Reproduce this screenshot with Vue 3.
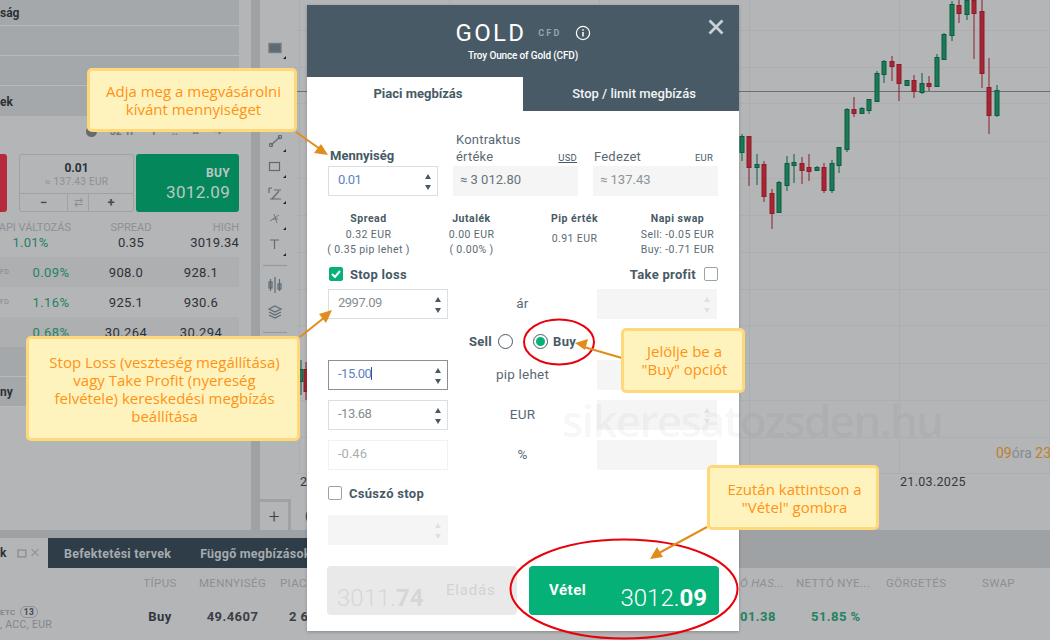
<script setup>
const gridY = [30, 67, 103, 141, 178, 215, 252, 289, 325, 363, 400, 437, 473]
const gridX = [299, 449, 599, 749, 899, 1049]

// cx, wick top, wick bottom, body top, body bottom, up?
const candles = [
  [301, 360, 395, 369, 381, 1], [306, 362, 400, 369, 391, 0],
  [742, 134, 161, 136, 152, 1], [749, 136, 186, 136, 167, 0], [757, 154, 185, 164, 167, 1],
  [764, 161, 202, 164, 196, 0], [772, 189, 229, 193, 213, 0], [779, 181, 212, 182, 212, 1],
  [787, 156, 191, 163, 185, 1], [794, 154, 183, 162, 165, 1], [802, 157, 184, 163, 170, 0],
  [809, 154, 181, 167, 171, 0], [817, 166, 170, 167, 170, 1], [824, 163, 193, 167, 190, 0],
  [832, 160, 193, 163, 190, 1], [839, 147, 173, 147, 165, 1], [847, 108, 152, 109, 149, 1],
  [854, 97, 117, 109, 113, 0], [862, 107, 113, 108, 113, 1], [869, 99, 114, 99, 110, 1],
  [877, 71, 101, 73, 101, 1], [884, 60, 83, 61, 74, 1], [892, 56, 81, 61, 66, 0],
  [899, 64, 101, 64, 83, 0], [907, 80, 85, 80, 85, 1], [914, 75, 98, 80, 91, 0],
  [922, 73, 94, 83, 92, 1], [929, 76, 91, 83, 86, 0], [937, 54, 87, 57, 86, 1],
  [944, 33, 59, 34, 59, 1], [952, 1, 41, 4, 35, 1], [959, 0, 23, 5, 13, 0],
  [967, 0, 20, 0, 14, 1], [974, 0, 59, 0, 13, 0], [982, 0, 88, 11, 73, 0],
  [989, 58, 134, 87, 115, 0], [997, 85, 117, 90, 115, 1]
]

const miniRows = [
  { tag: 'FD', pct: '0.09%', bid: '908.0', ask: '928.1', odd: true },
  { tag: 'FD', pct: '1.16%', bid: '925.1', ask: '930.6', odd: false },
  { tag: '', pct: '0.68%', bid: '30.264', ask: '30.294', odd: true }
]

const fees = [
  { title: 'Spread', lines: ['0.32 EUR', '( 0.35 pip lehet )'] },
  { title: 'Jutalék', lines: ['0.00 EUR', '( 0.00% )'] },
  { title: 'Pip érték', lines: ['0.91 EUR'], single: true },
  { title: 'Napi swap', lines: ['Sell: -0.05 EUR', 'Buy: -0.71 EUR'] }
]
</script>

<template>
  <div class="page">
    <div class="top">
      <aside class="side">
        <div class="side-row">ság</div>
        <div class="side-row"></div>
        <div class="side-row"></div>
        <div class="side-row last">ek</div>

        <div class="tools-mini">
          <span class="dot"></span><span>32·1F</span><span>T</span><span>⫶⫶</span><span>⌑</span><span>-+</span>
        </div>

        <div class="quote">
          <div class="sell-card"></div>
          <div class="qty-card">
            <div class="qty-main">
              <b>0.01</b>
              <span>≈ 137.43 EUR</span>
            </div>
            <div class="qty-ctrl">
              <span class="minus">−</span>
              <span class="swap">⇄</span>
              <span class="plus">+</span>
            </div>
          </div>
          <div class="buy-card">
            <b>BUY</b>
            <span>3012.09</span>
          </div>
        </div>

        <div class="stat-grid heads">
          <span>API VÁLTOZÁS</span><span>SPREAD</span><span>HIGH</span>
        </div>
        <div class="stat-grid vals">
          <span class="green center">1.01%</span><span>0.35</span><span>3019.34</span>
        </div>

        <div v-for="r in miniRows" :key="r.bid" class="mini-row" :class="{ odd: r.odd }">
          <span class="tag">{{ r.tag }}</span>
          <span class="green">{{ r.pct }}</span>
          <span>{{ r.bid }}</span>
          <span>{{ r.ask }}</span>
        </div>
        <div class="side-row section"></div>
        <div class="side-row section">ny</div>
      </aside>

      <div class="gutter"></div>

      <div class="toolbar">
        <svg width="35" height="530" viewBox="260 0 35 530" fill="none" stroke="#5f6b73" stroke-width="1.2">
          <rect x="269" y="43.500" width="12" height="9" fill="#5f6b73" stroke="#767c80" stroke-width="1.400" />
          <path d="M286 59v-3l-3 3z" fill="#222" stroke="none" />
          <path d="M271 145l9-8" />
          <circle cx="271" cy="145" r="1.6" />
          <circle cx="280" cy="137" r="1.6" />
          <path d="M286 152v-3l-3 3z" fill="#222" stroke="none" />
          <rect x="269.500" y="162.500" width="10" height="8" />
          <path d="M286 178v-3l-3 3z" fill="#222" stroke="none" />
          <path d="M274 190h7M270 199h11M279 191l-7 8M269 188h3M269 188v5" />
          <path d="M286 204v-3l-3 3z" fill="#222" stroke="none" />
          <path d="M270 221l9-6M274 214l3 9M278 219h-5" stroke-width="0.8" />
          <path d="M286 230v-3l-3 3z" fill="#222" stroke="none" />
          <path d="M270 240h9M274.500 240v9" />
          <path d="M286 256v-3l-3 3z" fill="#222" stroke="none" />
          <path d="M263 265.500h24" stroke="#949a9e" />
          <path d="M270.500 279v12M279.500 279v12M275 277v16" />
          <rect x="269" y="282" width="3" height="6" />
          <rect x="278" y="284" width="3" height="5" />
          <path d="M275 306l6 3-6 3-6-3zM269 312l6 3 6-3M269 315l6 3 6-3" />
          <path d="M263 332.500h24" stroke="#949a9e" />
        </svg>
        <div class="zoom-btn">+</div>
      </div>

      <div class="chart">
        <svg width="755" height="530" viewBox="295 0 755 530">
          <line v-for="y in gridY" :key="'h' + y" x1="295" x2="1050" :y1="y + 0.5" :y2="y + 0.5" stroke="#acaeb1" />
          <line v-for="x in gridX" :key="'v' + x" :x1="x + 0.5" :x2="x + 0.5" y1="0" y2="473" stroke="#acaeb1" />
          <line x1="295" x2="1050" y1="91.5" y2="91.5" stroke="#697173" />
          <g v-for="c in candles" :key="c[0]">
            <line :x1="c[0]" :x2="c[0]" :y1="c[1]" :y2="c[2]" :stroke="c[5] ? '#0b5d41' : '#8c1c2b'" />
            <rect :x="c[0] - 2" :y="c[3] + 0.5" width="4" :height="c[4] - c[3]"
              :fill="c[5] ? '#1c7a56' : '#a82533'" :stroke="c[5] ? '#0b5d41' : '#8c1c2b'" />
          </g>
          <text x="300" y="486" class="axis">2</text>
          <text x="900" y="486" class="axis">21.03.2025</text>
          <text x="996" y="458" class="timer"><tspan fill="#bf7f2c">09</tspan>óra <tspan fill="#bf7f2c">23</tspan></text>
          <text x="305" y="520" class="axis">(</text>
        </svg>
      </div>
    </div>

    <div class="band"></div>

    <div class="tabs-strip">
      <div class="tab-first">
        <span class="tab-k">k</span>
        <svg width="32" height="12" viewBox="0 0 32 12" fill="none" stroke="#8f9498" stroke-width="1.2">
          <rect x="1" y="3" width="8" height="7" stroke-width="1.6" />
          <path d="M15 2l7 7M22 2l-7 7" />
        </svg>
      </div>
      <div class="tab-dark">
        <span>Befektetési tervek</span>
        <span>Függő megbízások</span>
      </div>
    </div>

    <div class="pos-grid pos-head">
      <span></span><span class="center">TÍPUS</span><span class="center">MENNYISÉG</span><span class="piac">PIAC</span>
      <span class="it">Ó HAS...</span><span>NETTÓ NYE...</span><span>GÖRGETÉS</span><span>SWAP</span>
    </div>
    <div class="pos-grid pos-row">
      <span class="pos-name">
        <small>ETC <i>13</i></small>
        <small>, ACC, EUR</small>
      </span>
      <span class="center buy-txt">Buy</span>
      <span class="center">49.4607</span>
      <span class="piac2">2 6</span>
      <span class="green it-val">01.38</span>
      <span class="green pct-val">51.85 %</span>
      <span></span><span></span>
    </div>

    <!-- order dialog -->
    <section class="modal">
      <header class="m-head">
        <div class="m-title">
          <span class="gold">GOLD</span>
          <span class="cfd">CFD</span>
          <svg width="16" height="16" viewBox="0 0 16 16" fill="none" stroke="#fff" stroke-width="1.2">
            <circle cx="8" cy="8" r="6.600" />
            <path d="M8 7v4.500M8 4.300v1.400" stroke-width="1.500" />
          </svg>
        </div>
        <div class="m-sub">Troy Ounce of Gold (CFD)</div>
        <svg class="m-close" width="16" height="16" viewBox="0 0 16 16" stroke="#c9d1d6" stroke-width="2.800">
          <path d="M1.500 1.500l13 13M14.500 1.500l-13 13" />
        </svg>
      </header>

      <nav class="m-tabs">
        <div class="m-tab active">Piaci megbízás</div>
        <div class="m-tab">Stop / limit megbízás</div>
      </nav>

      <div class="m-body">
        <div class="trio">
          <div class="col-qty">
            <label class="strong pl2">Mennyiség</label>
            <div class="field qty"><span class="blue">0.01</span><i class="spin"></i></div>
          </div>
          <div class="col-info">
            <label class="lbl"><span>Kontraktus<br>értéke</span><u>USD</u></label>
            <div class="field ro dark-txt"><span>≈ 3 012.80</span></div>
          </div>
          <div class="col-info">
            <label class="lbl fed"><span>Fedezet</span><em>EUR</em></label>
            <div class="field ro"><span>≈ 137.43</span></div>
          </div>
        </div>

        <div class="fees">
          <div v-for="f in fees" :key="f.title" class="fee">
            <b>{{ f.title }}</b>
            <span v-for="l in f.lines" :key="l" :class="{ single: f.single }">{{ l }}</span>
          </div>
        </div>

        <div class="checks">
          <span class="chk on">
            <svg width="10" height="8" viewBox="0 0 10 8" fill="none" stroke="#fff" stroke-width="2"><path d="M1 4l3 3 5-6" /></svg>
          </span>
          <span class="strong">Stop loss</span>
          <span class="strong push">Take profit</span>
          <span class="chk"></span>
        </div>

        <div class="sl-row">
          <div class="field w120 gray-txt"><span>2997.09</span><i class="spin"></i></div>
          <span class="mid">ár</span>
          <div class="field w120 off"><i class="spin faint"></i></div>
        </div>

        <div class="radios">
          <span class="strong">Sell</span>
          <span class="radio"></span>
          <span class="radio on"></span>
          <span class="strong">Buy</span>
        </div>

        <div class="sl-row">
          <div class="field w120 focus"><span class="blue">-15.00<s class="caret"></s></span><i class="spin"></i></div>
          <span class="mid">pip lehet</span>
          <div class="field w120 off"></div>
        </div>
        <div class="sl-row">
          <div class="field w120 gray-txt"><span>-13.68</span><i class="spin"></i></div>
          <span class="mid">EUR</span>
          <div class="field w120 off"><i class="spin faint"></i></div>
        </div>
        <div class="sl-row">
          <div class="field w120 light"><span>-0.46</span></div>
          <span class="mid">%</span>
          <div class="field w120 off"></div>
        </div>

        <div class="trail">
          <span class="chk"></span>
          <span class="strong">Csúszó stop</span>
        </div>
        <div class="field w120 off"><i class="spin faint"></i></div>

        <div class="actions">
          <button class="act sell-act">
            <span class="price">3011.<b>74</b></span>
            <span class="act-name">Eladás</span>
          </button>
          <button class="act buy-act">
            <span class="act-name">Vétel</span>
            <span class="price">3012.<b>09</b></span>
          </button>
        </div>
      </div>
    </section>

    <div class="watermark">sikeresatozsden.hu</div>

    <!-- annotations -->
    <svg class="marks" width="1050" height="640" viewBox="0 0 1050 640" fill="none">
      <ellipse cx="559" cy="342" rx="35" ry="22.500" stroke="#e8000b" stroke-width="2" />
      <ellipse cx="624" cy="589" rx="113.500" ry="49.500" stroke="#e8000b" stroke-width="2" />
      <g stroke="#e08d1e" stroke-width="2">
        <path d="M296 132l24 17" />
        <path d="M300 337l25-20" />
        <path d="M622 358l-38-11" />
        <path d="M707 527l-48 26" />
      </g>
      <g fill="#e08d1e">
        <path d="M328 155l-14-2 7-9z" />
        <path d="M332 310l-6 13-7-9z" />
        <path d="M575 343l13-4-3 11z" />
        <path d="M650 559l7-12 6 10z" />
      </g>
    </svg>

    <div class="note n1">Adja meg a megvásárolni<br>kívánt mennyiséget</div>
    <div class="note n2">Stop Loss (veszteség megállítása)<br>vagy Take Profit (nyereség<br>felvétele) kereskedési megbízás<br>beállítása</div>
    <div class="note n3">Jelölje be a<br>"Buy" opciót</div>
    <div class="note n4">Ezután kattintson a<br>"Vétel" gombra</div>
  </div>
</template>

<style>
html, body { margin: 0; overflow: hidden; }
</style>

<style scoped>
.page {
  position: relative;
  width: 1050px;
  height: 640px;
  overflow: hidden;
  background: #b4b5b7;
  font-family: Roboto, sans-serif;
  color: #2b3238;
  display: flex;
  flex-direction: column;
}
.top { display: flex; height: 530px; flex: none; }

/* left panel */
.side { width: 239px; flex: none; font-size: 13px; }
.side-row {
  height: 29px;
  line-height: 26px;
  background: #a4a8ab;
  border-bottom: 1px solid #b8babc;
  font-weight: 700;
  font-size: 12px;
}
.side-row:first-child { height: 25px; }
.side-row.last { border-bottom: 0; height: 30px; line-height: 32px; }
.side-row.section { line-height: 30px; }
.tools-mini {
  height: 38px;
  box-sizing: border-box;
  padding: 10px 0 0 86px;
  display: flex;
  gap: 15px;
  font-size: 10px;
  font-weight: 700;
  color: #6e7377;
}
.dot { width: 11px; height: 11px; border-radius: 50%; background: #666a6d; margin-right: -2px; }
.quote { display: flex; height: 58px; }
.sell-card { width: 7px; background: #b52b3c; border-radius: 0 3px 3px 0; margin-right: 12px; }
.qty-card {
  width: 115px;
  box-sizing: border-box;
  border: 1px solid #9ea2a5;
  border-radius: 3px;
  margin-right: 2px;
  display: flex;
  flex-direction: column;
}
.qty-main { flex: 1; display: flex; flex-direction: column; align-items: center; padding-top: 6px; }
.qty-main b { font-size: 12px; line-height: 14px; }
.qty-main span { font-size: 10px; line-height: 14px; color: #8b9094; letter-spacing: 0.3px; }
.qty-ctrl {
  height: 17px;
  border-top: 1px solid #9ea2a5;
  display: grid;
  grid-template-columns: 47px 22px 1fr;
  text-align: center;
  font-size: 13px;
  line-height: 17px;
  font-weight: 700;
  color: #444a4f;
}
.swap { border: solid #9ea2a5; border-width: 0 1px; color: #8a8f93; font-weight: 400; font-size: 11px; }
.buy-card {
  width: 103px;
  background: #05875c;
  border-radius: 3px;
  color: #bcc7c3;
  text-align: right;
  padding: 12px 9px 0 0;
  box-sizing: border-box;
  display: flex;
  flex-direction: column;
}
.buy-card b { font-size: 12px; line-height: 14px; letter-spacing: 0.3px; }
.buy-card span { font-size: 17px; line-height: 24px; letter-spacing: 0.3px; }
.stat-grid { display: grid; grid-template-columns: 71px 120px 48px; font-size: 11px; }
.stat-grid span { white-space: nowrap; }
.stat-grid span:nth-child(1) { justify-self: end; }
.stat-grid span:nth-child(2) { justify-self: center; }
.stat-grid span:nth-child(3) { justify-self: end; }
.heads { color: #8d9195; padding-top: 9px; line-height: 14px; }
.vals { font-size: 13px; line-height: 16px; padding: 0 0 6px; letter-spacing: 0.2px; }
.vals .center { justify-self: center !important; padding-right: 10px; }
.green { color: #23825f; }
.mini-row {
  height: 30px;
  display: grid;
  grid-template-columns: 17px 68px 82px 68px 4px;
  align-items: center;
  text-align: center;
  font-size: 13px;
  letter-spacing: 0.4px;
}
.mini-row.odd { background: #adafb1; }
.tag { font-size: 7px; color: #82868a; text-align: left; }
.side-row.section { height: 29px; background: #a4a8ab; }

.gutter { width: 21px; flex: none; background: linear-gradient(to right, #b4b5b7 12px, #9ea2a5 12px); }

/* chart */
.toolbar { width: 35px; flex: none; position: relative; }
.toolbar svg { display: block; }
.zoom-btn {
  position: absolute;
  left: 0;
  bottom: 0;
  width: 28px;
  height: 28px;
  text-align: center;
  font-size: 19px;
  font-weight: 300;
  line-height: 30px;
  color: #3b4146;
  border: solid #9ea2a5;
  border-width: 3px 3px 0 0;
}
.chart { flex: 1; }
.chart svg { display: block; }
.axis { font-size: 12.500px; fill: #33393f; font-family: Roboto, sans-serif; letter-spacing: 0.3px; }
.timer { font-size: 14px; fill: #868b8f; font-family: Roboto, sans-serif; }

/* bottom */
.band { height: 8px; flex: none; background: #9ea2a5; }
.tabs-strip { height: 30px; flex: none; display: flex; background: #9ea2a5; }
.tab-first { width: 48px; background: #b4b5b7; display: flex; align-items: center; gap: 10px; font-size: 12px; font-weight: 700; }
.tab-k { width: 7px; overflow: hidden; }
.tab-dark {
  width: 452px;
  background: #2f3d48;
  color: #a5abaf;
  font-size: 12.500px;
  font-weight: 700;
  display: flex;
  align-items: center;
  gap: 29px;
  padding-left: 16px;
  box-sizing: border-box;
  letter-spacing: 0.25px;
}
.pos-grid { display: grid; grid-template-columns: 130px 60px 85px 455px 66px 90px 96px 68px; align-items: center; white-space: nowrap; }
.pos-head { height: 30px; font-size: 11.500px; color: #8c9094; letter-spacing: 0.35px; }
.pos-row { height: 42px; font-size: 13px; font-weight: 700; letter-spacing: 0.45px; color: #3a4046; padding-bottom: 6px; box-sizing: border-box; }
.center { justify-self: center; }
.piac { padding-left: 5px; }
.piac2 { padding-left: 14px; }
.it { font-style: italic; padding-left: 10px; }
.it-val { padding-left: 10px; color: #23825f; }
.pct-val { padding-left: 15px; color: #23825f; }
.buy-txt { color: #30373d; }
.pos-name { display: flex; flex-direction: column; color: #82878b; padding-top: 8px; align-self: start; }
.pos-name small { font-size: 10.500px; line-height: 12px; font-weight: 400; letter-spacing: 0.3px; }
.pos-name small:first-child { font-weight: 700; font-size: 8px; }
.pos-name i {
  font-style: normal;
  font-size: 8.500px;
  color: #43494e;
  border: 1px solid #8e9296;
  border-radius: 8px;
  padding: 0 3px;
  margin-left: 2px;
}

/* modal */
.modal {
  position: absolute;
  left: 307px;
  top: 5px;
  width: 432px;
  height: 626px;
  background: #fff;
  box-shadow: 0 1px 3px rgba(0, 0, 0, 0.25);
  color: #475a65;
  font-size: 12px;
  display: flex;
  flex-direction: column;
}
.m-head {
  position: relative;
  height: 72px;
  flex: none;
  background: #475a65;
  color: #fff;
  box-sizing: border-box;
  padding-top: 13px;
  text-align: center;
}
.m-title { display: flex; align-items: center; justify-content: center; height: 30px; }
.gold { font-size: 24px; letter-spacing: 2.300px; font-weight: 400; margin-right: 12px; }
.cfd { font-size: 9px; font-weight: 700; letter-spacing: 2.200px; color: #98a5ad; margin-right: 13px; }
.m-sub { font-size: 10px; font-weight: 500; letter-spacing: -0.15px; margin-top: 1px; line-height: 14px; }
.m-close { position: absolute; right: 15px; top: 14px; }
.m-tabs { display: flex; height: 34px; flex: none; }
.m-tab {
  flex: 1;
  text-align: center;
  line-height: 33px;
  background: #475a65;
  color: #f2f4f5;
  font-size: 13px;
  font-weight: 500;
  padding-left: 6px;
}
.m-tab.active { background: #fff; color: #475a65; font-weight: 700; }
.m-body { padding: 21px 21px 0; flex: 1; display: flex; flex-direction: column; }
.trio { display: grid; grid-template-columns: 110px 125px 125px; grid-template-rows: 64px; column-gap: 15px; height: 64px; }
.col-qty, .col-info { display: flex; flex-direction: column; justify-content: flex-end; min-height: 0; }
.strong { font-size: 13px; font-weight: 700; letter-spacing: 0.3px; color: #475a65; white-space: nowrap; }
.strong.pl2 { padding-left: 2px; line-height: 18px; margin-bottom: 1px; letter-spacing: 0; }
.lbl {
  display: flex;
  justify-content: space-between;
  align-items: flex-end;
  font-size: 13px;
  line-height: 17px;
  letter-spacing: 0.2px;
  padding: 0 1px 0 3px;
  color: #5a6a74;
  margin-bottom: 1px;
}
.lbl.fed { padding-left: 1px; }
.lbl u, .lbl em { font-size: 9.500px; font-style: normal; letter-spacing: 0.2px; line-height: 15px; color: #475a65; }
.lbl em { padding-right: 4px; }
.field {
  position: relative;
  height: 30px;
  box-sizing: border-box;
  border: 1px solid #dcdfe0;
  display: flex;
  align-items: center;
  padding: 0 0 3px 9px;
  font-size: 13px;
  letter-spacing: -0.5px;
  flex: none;
}
.w120 { width: 120px; }
.ro { background: #f5f5f5; border-color: #f5f5f5; padding-left: 6px; color: #8a949a; letter-spacing: 0; }
.dark-txt { color: #66747d; }
.off { background: #f5f5f5; border-color: #f5f5f5; }
.blue { color: #5c83c4; }
.gray-txt { color: #868e93; }
.light { border-color: #f0f1f1; color: #a9afb3; letter-spacing: 0; }
.focus { border-color: #8a9094; }
.caret { display: inline-block; width: 1px; height: 13px; background: #34578f; vertical-align: -2px; }
.spin { position: absolute; right: 5px; top: 7px; width: 8px; height: 16px; }
.spin::before, .spin::after {
  content: '';
  position: absolute;
  left: 1px;
  border-left: 3px solid transparent;
  border-right: 3px solid transparent;
}
.spin::before { top: 0; border-bottom: 5px solid #475a65; }
.spin::after { bottom: 0; border-top: 5px solid #475a65; }
.spin.faint::before { border-bottom-color: #dfe1e2; }
.spin.faint::after { border-top-color: #dfe1e2; }

.fees { display: grid; grid-template-columns: repeat(4, 103px); margin-top: 15px; margin-left: -11px; height: 55px; }
.fee { display: flex; flex-direction: column; align-items: center; font-size: 10.500px; letter-spacing: 0.4px; line-height: 15px; color: #5a6a74; }
.fee b { font-size: 10.500px; letter-spacing: 0.5px; line-height: 16px; color: #475a65; }
.fee .single { margin-top: 4px; }

.checks { display: flex; align-items: center; height: 16px; margin-left: 1px; width: 389px; }
.chk { width: 14px; height: 14px; box-sizing: border-box; border: 1px solid #9aa3a8; border-radius: 2px; display: flex; align-items: center; justify-content: center; flex: none; margin-right: 7px; }
.chk.on { background: #05b176; border-color: #05b176; }
.checks .chk:last-child { margin-right: 0; margin-left: 8px; }
.push { margin-left: auto; }
.sl-row { display: grid; grid-template-columns: 120px 149px 120px; align-items: center; margin-top: 7px; margin-bottom: 3px; }
.mid { text-align: center; font-size: 13.500px; color: #5a6a74; letter-spacing: 0.2px; padding-bottom: 3px; }
.radios { display: flex; align-items: center; height: 20px; margin: 9px 0 2px 141px; }
.radio { width: 15px; height: 15px; box-sizing: border-box; border: 1px solid #475a65; border-radius: 50%; margin: 0 6px 0 6px; position: relative; flex: none; }
.radio.on { margin-left: 14px; margin-right: 5px; }
.radio.on::after { content: ''; position: absolute; inset: 2px; border-radius: 50%; background: #05b176; }
.trail { display: flex; align-items: center; height: 16px; margin-top: 12px; margin-bottom: 14px; }
.actions { display: flex; gap: 12px; margin-top: 21px; margin-left: -1px; width: 392px; }
.act {
  width: 190px;
  height: 49px;
  border: 0;
  border-radius: 4px;
  padding: 0;
  display: flex;
  font-family: Roboto, sans-serif;
  position: relative;
}
.sell-act { background: #e9e9e9; color: #d5d5d5; }
.buy-act { background: #05b176; color: #fff; }
.price { font-size: 24px; font-weight: 300; line-height: 30px; position: absolute; top: 17px; }
.price b { font-weight: 700; }
.sell-act .price { left: 10px; color: #d6d6d6; }
.buy-act .price { right: 12px; }
.act-name { position: absolute; font-size: 15px; top: 15px; line-height: 18px; }
.sell-act .act-name { left: 119px; color: #d2d2d2; letter-spacing: 0.8px; }
.buy-act .act-name { left: 20px; font-weight: 700; letter-spacing: 0.5px; }

.watermark {
  position: absolute;
  left: 562px;
  top: 395px;
  font-family: "Open Sans", sans-serif;
  font-size: 44px;
  font-weight: 600;
  letter-spacing: -1.700px;
  line-height: 50px;
  color: rgba(0, 0, 0, 0.055);
  white-space: nowrap;
  pointer-events: none;
}
.marks { position: absolute; left: 0; top: 0; pointer-events: none; }
.note {
  position: absolute;
  box-sizing: border-box;
  background: #fff3bd;
  border: 3px solid #ffd87c;
  border-radius: 5px;
  color: #ff9214;
  font-family: "Open Sans", sans-serif;
  font-size: 15px;
  font-weight: 500;
  line-height: 18px;
  text-align: center;
  display: flex;
  align-items: center;
  justify-content: center;
  padding-left: 3px;
}
.n1 { left: 87px; top: 68px; width: 210px; height: 64px; }
.n2 { left: 26px; top: 336px; width: 274px; height: 105px; }
.n3 { left: 621px; top: 328px; width: 124px; height: 65px; padding-bottom: 2px; }
.n4 { left: 707px; top: 465px; width: 172px; height: 65px; }
</style>
